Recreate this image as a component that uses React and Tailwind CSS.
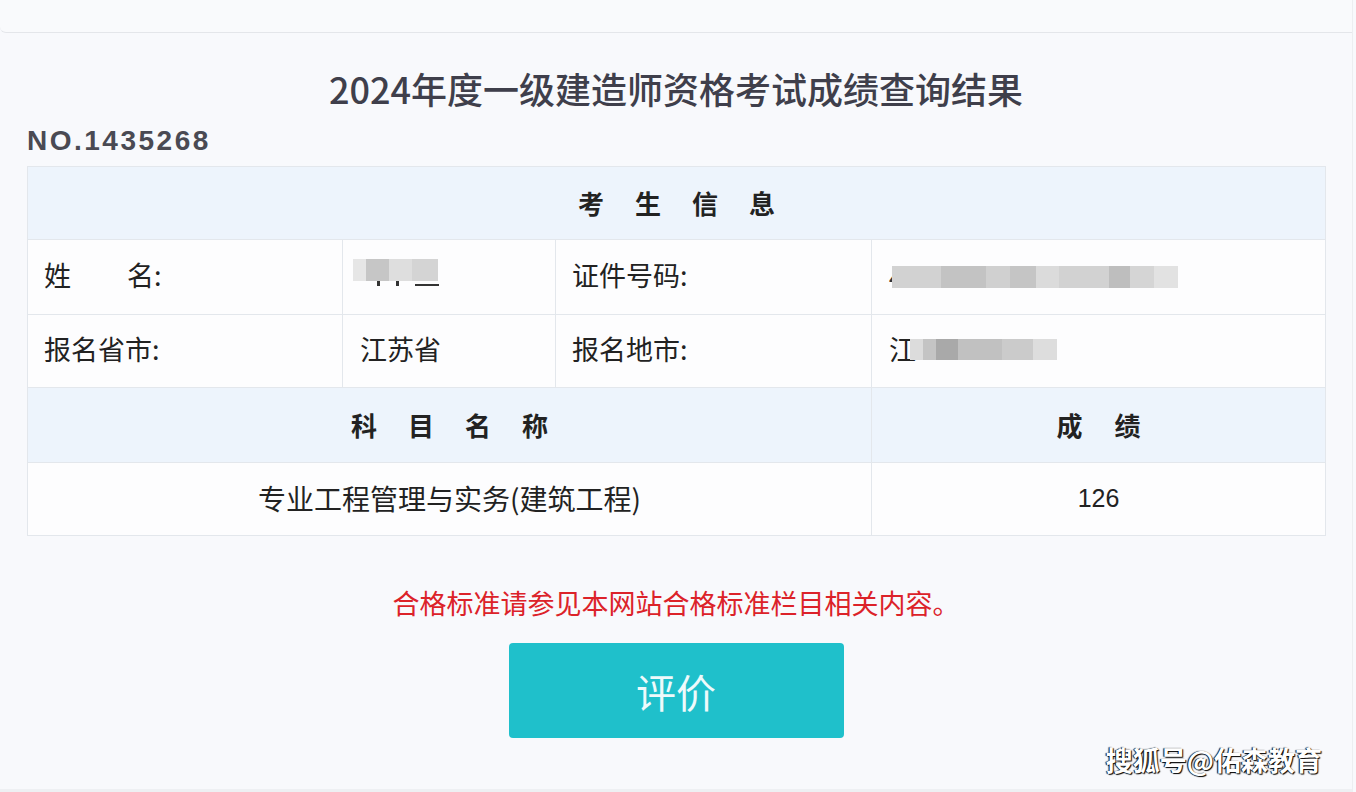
import React from 'react';

const cjk = { fontFamily: '"Noto Sans CJK SC", "Noto Sans", sans-serif' };

// mosaic blocks used to blur personal data
const Mosaic = ({ blocks, h = 'h-[22px]' }) => (
  <div className={`relative flex ${h}`}>
    {blocks.map(([w, c], i) => (
      <div key={i} style={{ width: w, backgroundColor: c }} />
    ))}
  </div>
);

const nameBlocks = [[13, '#e6e6e6'], [23, '#c6c6c6'], [23, '#dedede'], [26, '#d4d4d4']];
const idBlocks = [
  [49, '#d2d2d2'], [45, '#c3c3c3'], [24, '#d0d0d0'], [26, '#c5c5c5'], [23, '#dbdbdb'],
  [50, '#d2d2d2'], [21, '#bebebe'], [24, '#d5d5d5'], [24, '#e2e2e2'],
];
const cityBlocks = [[13, '#dcdcdc'], [13, '#c4c4c4'], [22, '#a9a9a9'], [44, '#c1c1c1'], [31, '#cbcbcb'], [24, '#dddddd']];

const Label = ({ children }) => (
  <td className="border border-[#e3e7ec] bg-[#fdfdfe] pl-[16px] pb-[4px] text-[27px] text-[#222]">{children}</td>
);

const Value = ({ children }) => (
  <td className="border border-[#e3e7ec] bg-[#fdfdfe] pl-[17px] pb-[4px] text-[27px] text-[#222]">{children}</td>
);

export default function App() {
  return (
    <div className="h-[792px] w-full overflow-hidden bg-[#f8f9fc]" style={cjk}>
      <div className="h-[792px] w-[1353px] border-r border-[#eceef1] border-b-[3px] border-b-[#eef0f3]">
        {/* top strip */}
        <div className="h-[33px] border-b border-[#e4e6ea] bg-[#f9fafc] rounded-bl-[6px]" />

        <div className="px-[27px]">
          <h1 className="mt-[36px] text-center text-[36px] leading-[38px] font-medium text-[#3f3f4b]">
            2024年度一级建造师资格考试成绩查询结果
          </h1>
          <div
            className="mt-[19px] text-[28px] leading-[30px] font-bold text-[#4a4a53] tracking-[2.5px]"
            style={{ fontFamily: '"Liberation Sans", Arial, sans-serif' }}
          >
            NO.1435268
          </div>

          <table className="mt-[10px] w-[1298px] table-fixed border-collapse">
            <colgroup>
              <col className="w-[315px]" />
              <col className="w-[213px]" />
              <col className="w-[316px]" />
              <col className="w-[454px]" />
            </colgroup>
            <tbody>
              <tr className="h-[73px]">
                <td colSpan={4} className="border border-[#e3e7ec] bg-[#edf4fc] pb-[2px] text-center text-[26px] font-bold text-[#222]">
                  <span className="tracking-[31px] pl-[31px]">考生信息</span>
                </td>
              </tr>
              <tr className="h-[75px]">
                <Label>
                  <span className="mr-[56px]">姓</span>名:
                </Label>
                <Value>
                  <div className="-ml-[7px] inline-block pt-[4px]">
                    <Mosaic blocks={nameBlocks} />
                    <div className="flex h-[5px] gap-[16px] pl-[24px]">
                      <div className="w-[3px] bg-[#333]" />
                      <div className="w-[3px] bg-[#333]" />
                      <div className="w-[24px] mt-[3px] h-[2px] bg-[#333]" />
                    </div>
                  </div>
                </Value>
                <Label>证件号码:</Label>
                <Value>
                  <div className="flex items-center pt-[3px]">
                    <span className="text-[24px] leading-[22px] text-[#333]">4</span>
                    <div className="-ml-[10px]">
                      <Mosaic blocks={idBlocks} />
                    </div>
                  </div>
                </Value>
              </tr>
              <tr className="h-[73px]">
                <Label>报名省市:</Label>
                <Value>江苏省</Value>
                <Label>报名地市:</Label>
                <Value>
                  <div className="flex items-center">
                    <span className="text-[27px] leading-[28px] text-[#222]">江</span>
                    <div className="-ml-[6px]">
                      <Mosaic blocks={cityBlocks} h="h-[21px]" />
                    </div>
                  </div>
                </Value>
              </tr>
              <tr className="h-[75px]">
                <td colSpan={3} className="border border-[#e3e7ec] bg-[#edf4fc] pb-[2px] text-center text-[26px] font-bold text-[#222]">
                  <span className="tracking-[31px] pl-[31px]">科目名称</span>
                </td>
                <td className="border border-[#e3e7ec] bg-[#edf4fc] pb-[2px] text-center text-[26px] font-bold text-[#222]">
                  <span className="tracking-[32px] pl-[32px]">成绩</span>
                </td>
              </tr>
              <tr className="h-[73px]">
                <td colSpan={3} className="border border-[#e3e7ec] bg-[#fdfdfe] pb-[3px] text-center text-[28px] text-[#222]">
                  专业工程管理与实务(建筑工程)
                </td>
                <td
                  className="border border-[#e3e7ec] bg-[#fdfdfe] text-center text-[25px] text-[#222]"
                  style={{ fontFamily: '"Liberation Sans", Arial, sans-serif' }}
                >
                  126
                </td>
              </tr>
            </tbody>
          </table>

          <p className="mt-[51px] text-center text-[27px] leading-[32px] text-[#dc2229]">
            合格标准请参见本网站合格标准栏目相关内容。
          </p>

          <div className="mt-[24px] flex justify-center">
            <button className="h-[95px] w-[335px] rounded-[4px] bg-[#1fc0cb] text-[40px] text-[#eefafb]">
              评价
            </button>
          </div>

          <div className="mt-[6px] flex justify-end pr-[3px]">
            <span className="text-[27px] leading-[32px] font-bold text-white [text-shadow:1px_1px_1px_#000,-1px_0_1px_#000]">
              搜狐号@佑森教育
            </span>
          </div>
        </div>
      </div>
    </div>
  );
}
